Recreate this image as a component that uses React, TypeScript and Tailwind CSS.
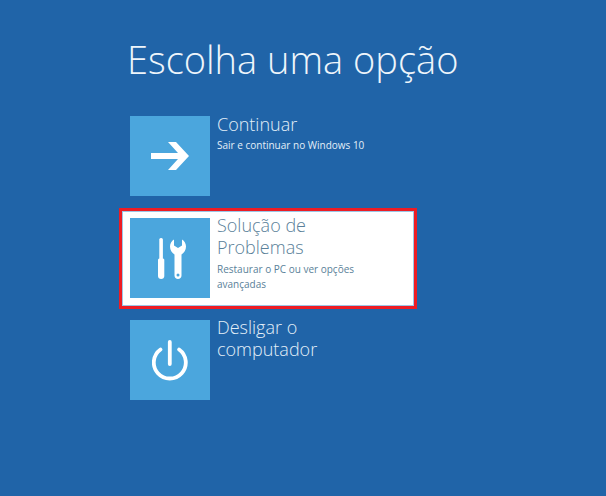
const FONT = "font-['Open_Sans','Noto_Sans',sans-serif]";

function ArrowIcon() {
  return (
    <svg width="38" height="28" viewBox="0 0 38 28" fill="white">
      <polygon points="0,11 27,11 17,0 25,0 38,14 25,28 17,28 27,17 0,17" />
    </svg>
  );
}

function ToolsIcon() {
  return (
    <svg className="ml-[3px]" width="28" height="41" viewBox="0 0 28 41" fill="white">
      <rect x="1.3" y="0" width="3.6" height="22" rx="1.6" />
      <path d="M0 22C0 21 .8 20.5 1.5 20.5H4.8C5.5 20.5 6.3 21 6.3 22V38C6.3 39.8 5 41 3.15 41C1.3 41 0 39.8 0 38Z" />
      <path
        fillRule="evenodd"
        d="M16 1.5C13.5 2.9 12 5.6 12 8.5C12 12 13.9 15 16.5 16.5V37.5C16.5 39.5 18 41 20 41C22 41 23.5 39.5 23.5 37.5V16.5C26.1 15 28 12 28 8.5C28 5.6 26.5 2.9 24 1.5V7.5L20 10L16 7.5ZM20 35.5A1.5 1.5 0 1 0 20 38.5A1.5 1.5 0 1 0 20 35.5Z"
      />
    </svg>
  );
}

function PowerIcon() {
  return (
    <svg width="36" height="41" viewBox="0 0 36 41" fill="none" stroke="white" strokeWidth="3.8">
      <path d="M17.8 1.9V24" strokeLinecap="round" />
      <path d="M8.5 9.5A16 16 0 1 0 27.1 9.5" strokeLinecap="round" />
    </svg>
  );
}

type OptionProps = {
  icon: React.ReactNode;
  title: string[];
  description?: string[];
  selected?: boolean;
};

function Option({ icon, title, description, selected }: OptionProps) {
  return (
    <div
      className={
        selected
          ? "flex h-[101px] w-[298px] gap-[7px] border-[3px] border-[#ed1c24] bg-white pl-[8px] pt-[7px] shadow-[inset_0_0_0_1px_#9cc6e6]"
          : "flex h-[101px] w-[298px] gap-[7px] pl-[11px] pt-[10px]"
      }
    >
      <div className="flex h-[80px] w-[80px] shrink-0 items-center justify-center bg-[#4ba6dd]">
        {icon}
      </div>
      <div className={selected ? "text-[#5a7f99]" : "text-[#e3eff8]"}>
        <div
          className={
            title.length > 1
              ? "-mt-[4px] text-[18px] leading-[22px] font-light"
              : "-mt-[3px] text-[18px] leading-[22px] font-light"
          }
        >
          {title.map((line) => (
            <div key={line}>{line}</div>
          ))}
        </div>
        {description ? (
          <div
            className={
              title.length > 1
                ? "mt-[4px] text-[10px] leading-[15px]"
                : "mt-[3px] text-[10px] leading-[15px]"
            }
          >
            {description.map((line) => (
              <div key={line}>{line}</div>
            ))}
          </div>
        ) : null}
      </div>
    </div>
  );
}

export default function App() {
  return (
    <main className={`h-[496px] w-[606px] overflow-hidden bg-[#2064a8] pl-[119px] pt-[35px] ${FONT}`}>
      <h1 className="ml-[8px] text-[38px] leading-[48px] font-light whitespace-nowrap text-[#eef5fb]">
        Escolha uma opção
      </h1>
      <div className="mt-[23px] flex flex-col gap-[1px]">
        <Option
          icon={<ArrowIcon />}
          title={["Continuar"]}
          description={["Sair e continuar no Windows 10"]}
        />
        <Option
          selected
          icon={<ToolsIcon />}
          title={["Solução de", "Problemas"]}
          description={["Restaurar o PC ou ver opções", "avançadas"]}
        />
        <Option icon={<PowerIcon />} title={["Desligar o", "computador"]} />
      </div>
    </main>
  );
}
